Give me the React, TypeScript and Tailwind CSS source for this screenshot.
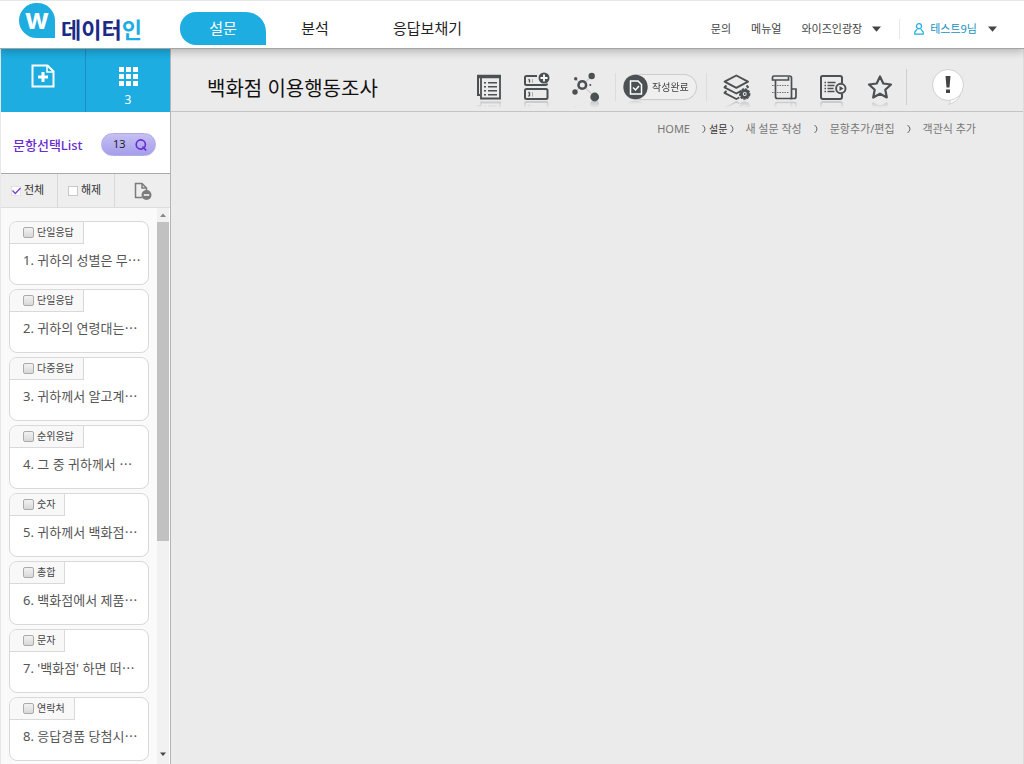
import React, { useState } from 'react';

interface IQuestion {
  id: number;
  type: string;
  title: string;
}

const questions: IQuestion[] = [
  { id: 1, type: '단일응답', title: '귀하의 성별은 무' },
  { id: 2, type: '단일응답', title: '귀하의 연령대는' },
  { id: 3, type: '다중응답', title: '귀하께서 알고계' },
  { id: 4, type: '순위응답', title: '그 중 귀하께서 ' },
  { id: 5, type: '숫자', title: '귀하께서 백화점' },
  { id: 6, type: '총합', title: '백화점에서 제품' },
  { id: 7, type: '문자', title: "'백화점' 하면 떠" },
  { id: 8, type: '연락처', title: '응답경품 당첨시' },
];

const totalQuestions = 13;

function Caret() {
  return (
    <svg className="w-[9px] h-[6px]" viewBox="0 0 9 6" fill="#444">
      <path d="M0 .5h9L4.500 5.800z" />
    </svg>
  );
}

function Header() {
  return (
    <header className="relative z-10 flex h-[49px] items-start border-y border-t-gray-200 border-b-[#a5a5a5] bg-white shadow-[0_3px_8px_rgba(0,0,0,0.22)]">
      <a href="#" className="flex w-[180px] shrink-0 pl-[19px] pt-[2px]">
        <span className="flex h-[35px] w-9 items-center justify-center rounded-full rounded-br-none bg-[#1dade1] pb-[3px] font-['Inter'] text-[28px] font-bold leading-none text-white">
          w
        </span>
        <span className="ml-[6px] mt-[14px] whitespace-nowrap text-[22px] font-bold leading-6 text-[#1b2a86]">
          데이터<span className="text-[#1dade1]">인</span>
        </span>
      </a>
      <nav className="mt-[11px] flex text-[15px] leading-[33px] text-[#222]">
        <a href="#" className="w-[86px] rounded-l-[16px] rounded-tr-[20px] bg-[#1dade1] text-center text-white">설문</a>
        <a href="#" className="w-[98px] text-center">분석</a>
        <a href="#" className="ml-7 pl-px">응답보채기</a>
      </nav>
      <div className="ml-auto mt-[18px] flex items-center whitespace-nowrap pr-[27px] text-[11px] leading-5 text-[#444]">
        <a href="#">문의</a>
        <a href="#" className="ml-5">메뉴얼</a>
        <button className="ml-5 flex items-center gap-[10px]">
          와이즈인광장
          <Caret />
        </button>
        <span className="ml-[18px] h-5 w-px bg-gray-200" />
        <button className="ml-[14px] flex items-center text-[#1591bf]">
          <svg className="mr-[6px] h-3 w-[10px]" viewBox="0 0 10 12" fill="none" stroke="#1dade1" strokeWidth="1.200">
            <circle cx="5" cy="3.200" r="2.500" />
            <path d="M3.200 6.200L.8 9v2.200h8.400V9L6.800 6.200" />
          </svg>
          테스트9님
          <span className="ml-[11px]"><Caret /></span>
        </button>
      </div>
    </header>
  );
}

function IconButton({ label, children }: { label: string; children: React.ReactNode }) {
  return (
    <button
      aria-label={label}
      className="h-[30px] w-[30px] shrink-0 [-webkit-box-reflect:below_-3px_linear-gradient(transparent_70%,rgba(0,0,0,0.3))]"
    >
      <svg className="h-[30px] w-[30px]" viewBox="0 0 30 30" fill="none" stroke="#4a5053" strokeWidth="2">
        {children}
      </svg>
    </button>
  );
}

function Toolbar() {
  return (
    <div className="flex h-[63px] items-center border-b border-[#c4c4c4] pl-9 pr-[58px] pt-[14px]">
      <h1 className="whitespace-nowrap pt-1 text-xl leading-7 text-[#111]">백화점 이용행동조사</h1>
      <div className="ml-auto flex items-center">
        <div className="flex gap-[18px]">
          <IconButton label="설문지">
            <path d="M3 4.500h24" strokeWidth="3.500" />
            <path d="M4 4v19h2" />
            <path d="M7 6v20.500h19V6" strokeWidth="1.800" />
            <path d="M10 10.800h2M10 14.800h2M10 18.800h2M10 22.800h2M14 10.800h9M14 14.800h9M14 18.800h9M14 22.800h9" strokeWidth="1.600" />
          </IconButton>
          <IconButton label="문항 추가">
            <path d="M15 4H4.500Q3 4 3 5.500v6Q3 13 4.500 13h19q1.500 0 1.500-1.500" />
            <rect x="3" y="17" width="22.500" height="10" rx="1.500" />
            <path d="M7.500 7.500v3M7.500 20.500v3.500M6.500 8l1-.5M6.300 20.500h1.200M6.300 24h1.200" strokeWidth="1.400" />
            <path d="M10.500 7v4M10.500 20v4.500" strokeWidth=".4" />
            <circle cx="22" cy="6" r="5.500" fill="#4a5053" stroke="none" />
            <path d="M22 2.500v7M18.500 6h7" stroke="#fff" strokeWidth="1.800" />
          </IconButton>
          <IconButton label="로직">
            <path d="M12 13L22 4M12 13l13 12M12 13l-7 7M12 13L5.500 7" stroke="#999" strokeWidth=".6" />
            <circle cx="12.300" cy="13" r="3.800" fill="#ececec" strokeWidth="2.600" />
            <g fill="#4a5053" stroke="none">
              <circle cx="21.700" cy="4" r="3.200" />
              <circle cx="24.700" cy="25" r="4.400" />
              <circle cx="5" cy="20" r="2.700" />
              <circle cx="5.700" cy="6.700" r="1.700" />
              <circle cx="20.300" cy="13" r="1" />
            </g>
          </IconButton>
        </div>
        <span className="ml-[15px] h-7 w-px bg-[#dcdcdc]" />
        <button className="ml-[7px] flex h-[26px] w-[74px] items-center rounded-full border border-l-0 border-[#cdcdcd] bg-[#efefef] text-[10px] leading-6 whitespace-nowrap text-[#444] [-webkit-box-reflect:below_0px_linear-gradient(transparent_85%,rgba(0,0,0,0.2))]">
          <svg className="mr-1 h-[26px] w-[25px] shrink-0" viewBox="0 0 25 26" fill="none">
            <circle cx="12.500" cy="13" r="12.200" fill="#4a5053" />
            <path d="M7.500 7h7.500l3.500 3.500V20h-11z" stroke="#fff" strokeWidth="1.500" />
            <path d="M10 13.500l2.500 2.500 3.500-4" stroke="#fff" strokeWidth="1.500" />
          </svg>
          작성완료
        </button>
        <span className="ml-[9px] h-7 w-px bg-[#dcdcdc]" />
        <div className="ml-[15px] flex gap-[18px]">
          <IconButton label="레이어">
            <path d="M14.300 3.500L26 9.700l-11.700 6.100L2.600 9.700z" strokeWidth="1.900" strokeLinejoin="round" />
            <path d="M4.500 13.500l-2 1.800 11.800 6.200 5-2.600M24.500 13.500l1.500 1.500-1 .8M4.500 19l-2 1.800 11.800 6.200 3-1.500" strokeWidth="1.900" strokeLinejoin="round" />
            <circle cx="22.700" cy="22" r="5" strokeWidth="1.400" strokeDasharray="2.500 .8" />
            <circle cx="22.700" cy="22" r="3.400" fill="#ececec" strokeWidth="2.800" />
            <circle cx="22.700" cy="22" r="1" fill="#4a5053" stroke="none" />
          </IconButton>
          <IconButton label="두루마리">
            <path d="M5.500 8H2.500V5.500Q2.500 4 4 4h15.500Q21.500 4 21.500 6v20.500H7.500Q5.500 26.500 5.500 24.500V8h13V5" strokeWidth="1.700" />
            <path d="M21.500 17h4.500v7.500q0 2-2 2h-4" strokeWidth="1.700" />
            <path d="M2 13.500h17M2 20.500h17" strokeWidth=".8" strokeDasharray="1.500 1" />
          </IconButton>
          <IconButton label="미리보기">
            <path d="M24 11V6q0-2-2-2H4.500Q3 4 3 5.500V25q0 2 2 2h17q2 0 2-2v-3" />
            <path d="M6.500 10.500H8M6.500 13.500H8M6.500 16.500H8M6.500 19.500H8M9.500 10.500h8M9.500 13.500h7M9.500 16.500h6M9.500 19.500h7" strokeWidth="1.400" />
            <circle cx="22.800" cy="16.500" r="4.700" fill="#ececec" strokeWidth="1.900" />
            <path d="M21.500 14l4 2.500-4 2.500z" fill="#4a5053" stroke="none" />
          </IconButton>
          <IconButton label="즐겨찾기">
            <path d="M14 4.500l3.300 7 7.700 1-5.700 5.300 1.500 7.700-6.800-3.800-6.800 3.800 1.500-7.700L3 12.500l7.700-1z" strokeWidth="2.200" strokeLinejoin="round" />
          </IconButton>
        </div>
        <span className="ml-[10px] h-9 w-px bg-[#cfcfcf]" />
        <button aria-label="알림" className="ml-6 h-9 w-[34px]">
          <svg className="h-9 w-[34px]" viewBox="0 0 34 36" fill="#fff" stroke="#d0d0d0">
            <path d="M20 30q0 3-2.500 5.500Q26 33 29.500 26z" />
            <circle cx="17" cy="16" r="15.500" />
            <path d="M20.500 30.500l8-4.500v-1l-8 4z" stroke="none" />
            <path d="M14.500 7h5l-1 11.500h-3zM15 20.500h4v3.500h-4z" fill="#444" stroke="none" />
          </svg>
        </button>
      </div>
    </div>
  );
}

function Chevron() {
  return (
    <svg className="h-2 w-1" viewBox="0 0 4 8" fill="none" stroke="#666">
      <path d="M.5 0q2.500 2 2.500 4T.5 8" />
    </svg>
  );
}

function Breadcrumb() {
  return (
    <nav className="flex h-[34px] items-center justify-end whitespace-nowrap pr-[47px] text-[11px] text-[#777]">
      <a href="#">HOME</a>
      <span className="ml-3"><Chevron /></span>
      <a href="#" className="mx-[3px] text-[10px] text-[#333]">설문</a>
      <Chevron />
      <a href="#" className="ml-[11px] mr-3">새 설문 작성</a>
      <Chevron />
      <a href="#" className="mx-3">문항추가/편집</a>
      <Chevron />
      <a href="#" className="ml-3">객관식 추가</a>
    </nav>
  );
}

function QuestionCard({ question, checked, onToggle }: { question: IQuestion; checked: boolean; onToggle: () => void }) {
  return (
    <li className="h-16 overflow-hidden rounded-lg border border-[#d9d9d9] bg-white">
      <label className="flex h-[22px] w-fit items-center gap-[3px] border-b border-r border-[#d9d9d9] bg-[#f8f8f8] pb-px pl-[13px] pr-[9px] text-[10px] leading-5 text-[#444]">
        <input
          type="checkbox"
          checked={checked}
          onChange={onToggle}
          className="h-[11px] w-[11px] appearance-none rounded-xs border border-[#aaa] bg-linear-to-b from-[#f2f2f2] to-[#d8d8d8] checked:from-[#7a3fd0] checked:to-[#7a3fd0]"
        />
        {question.type}
      </label>
      <p className="whitespace-pre pl-[13px] pt-[6px] text-[13px] leading-5 text-[#555]">
        {question.id}. {question.title}⋯
      </p>
    </li>
  );
}

function Sidebar() {
  const [selected, setSelected] = useState<number[]>([]);

  const handleToggle = (id: number) => {
    setSelected((prev) => (prev.includes(id) ? prev.filter((item) => item !== id) : [...prev, id]));
  };

  return (
    <aside className="flex w-[171px] shrink-0 flex-col border-x border-l-gray-200 border-r-[#b5b5b5] bg-[#fafafa]">
      <div className="flex h-[63px] bg-[#1dade1] text-white">
        <button aria-label="새 설문" className="flex w-[85px] justify-center border-r border-[#1690bd] pt-[15px]">
          <svg className="h-6 w-6" viewBox="0 0 24 24" fill="none" stroke="#fff" strokeWidth="2">
            <path d="M1.500 1.500h15l6 6v15h-21z" />
            <path d="M16 1.500V8h6.500" strokeWidth="1.500" />
            <path d="M12 8v10M7 13h10" strokeWidth="3" />
          </svg>
        </button>
        <button className="flex flex-1 flex-col items-center pt-[18px] text-xs leading-4">
          <svg className="mb-[6px] h-[19px] w-[19px]" viewBox="0 0 19 19" fill="#fff">
            {[0, 7, 14].map((y) => [0, 7, 14].map((x) => <rect key={`${x}-${y}`} x={x} y={y} width="5" height="5" />))}
          </svg>
          3
        </button>
      </div>

      <div className="flex h-[62px] items-center justify-between border-b border-[#aaa] bg-white pl-3 pr-[14px] pt-1">
        <h2 className="whitespace-nowrap text-[13px] font-medium leading-5 text-[#6a2cd0]">문항선택List</h2>
        <button className="flex h-[23px] w-[55px] items-center justify-between rounded-full border border-[#b3abe6] bg-linear-to-b from-[#c5bff3] to-[#a59eec] pl-[11px] pr-2 text-[11px] text-[#222]">
          {totalQuestions}
          <svg className="h-3 w-3" viewBox="0 0 12 12" fill="none" stroke="#6a2cd0" strokeWidth="1.600">
            <circle cx="5.800" cy="5.500" r="4.600" />
            <path d="M7.500 7.500l3.700 4" />
          </svg>
        </button>
      </div>

      <div className="flex h-[34px] border-b border-[#ddd] bg-[#eee] text-[11px] text-[#333]">
        <button
          className="flex w-[57px] items-center gap-[3px] border-r border-[#d8d8d8] pl-[10px]"
          onClick={() => setSelected(questions.map((question) => question.id))}
        >
          <svg className="h-[10px] w-[10px]" viewBox="0 0 10 10" fill="none">
            <rect x=".5" y=".5" width="9" height="9" fill="#fff" stroke="#ccc" strokeDasharray="1 1" />
            <path d="M1.500 4.500l2.800 3L9.500 2" stroke="#7a3fd0" strokeWidth="1.300" />
          </svg>
          전체
        </button>
        <button
          className="flex w-[57px] items-center gap-[3px] border-r border-[#d8d8d8] pl-[10px]"
          onClick={() => setSelected([])}
        >
          <svg className="h-[10px] w-[10px]" viewBox="0 0 10 10">
            <rect x=".5" y=".5" width="9" height="9" fill="#fff" stroke="#999" strokeDasharray="1 1" />
          </svg>
          해제
        </button>
        <button aria-label="삭제" className="flex flex-1 items-center justify-center">
          <svg className="h-[18px] w-[18px]" viewBox="0 0 18 18" fill="none" stroke="#7c7c7c" strokeWidth="1.500">
            <path d="M8 15.500H1.500v-14H8L12.500 6v3" />
            <path d="M8 1.500V6h4.500" />
            <circle cx="12.500" cy="13" r="5" fill="#7c7c7c" stroke="none" />
            <path d="M9.800 13h5.400" stroke="#fff" />
          </svg>
        </button>
      </div>

      <div className="flex flex-1 justify-between">
        <ul className="ml-2 mt-[13px] flex w-[140px] flex-col gap-1">
          {questions.map((question) => (
            <QuestionCard
              key={question.id}
              question={question}
              checked={selected.includes(question.id)}
              onToggle={() => handleToggle(question.id)}
            />
          ))}
        </ul>
        <div className="mr-px flex w-3 flex-col bg-[#f1f1f1]">
          <svg className="h-[14px] w-3" viewBox="0 0 12 14" fill="#888">
            <path d="M6 5.500L9 9H3z" />
          </svg>
          <div className="flex-1">
            <div className="h-[319px] bg-[#c1c1c1]" />
          </div>
          <svg className="h-[18px] w-3" viewBox="0 0 12 18" fill="#444">
            <path d="M3 6.500h6L6 10z" />
          </svg>
        </div>
      </div>
    </aside>
  );
}

export default function App() {
  return (
    <div className="flex min-h-screen flex-col bg-[#ebebeb] font-['Noto_Sans','Noto_Sans_CJK_KR',sans-serif]">
      <Header />
      <div className="flex flex-1">
        <Sidebar />
        <main className="flex-1 border-r border-[#ddd]">
          <Toolbar />
          <Breadcrumb />
        </main>
      </div>
    </div>
  );
}
